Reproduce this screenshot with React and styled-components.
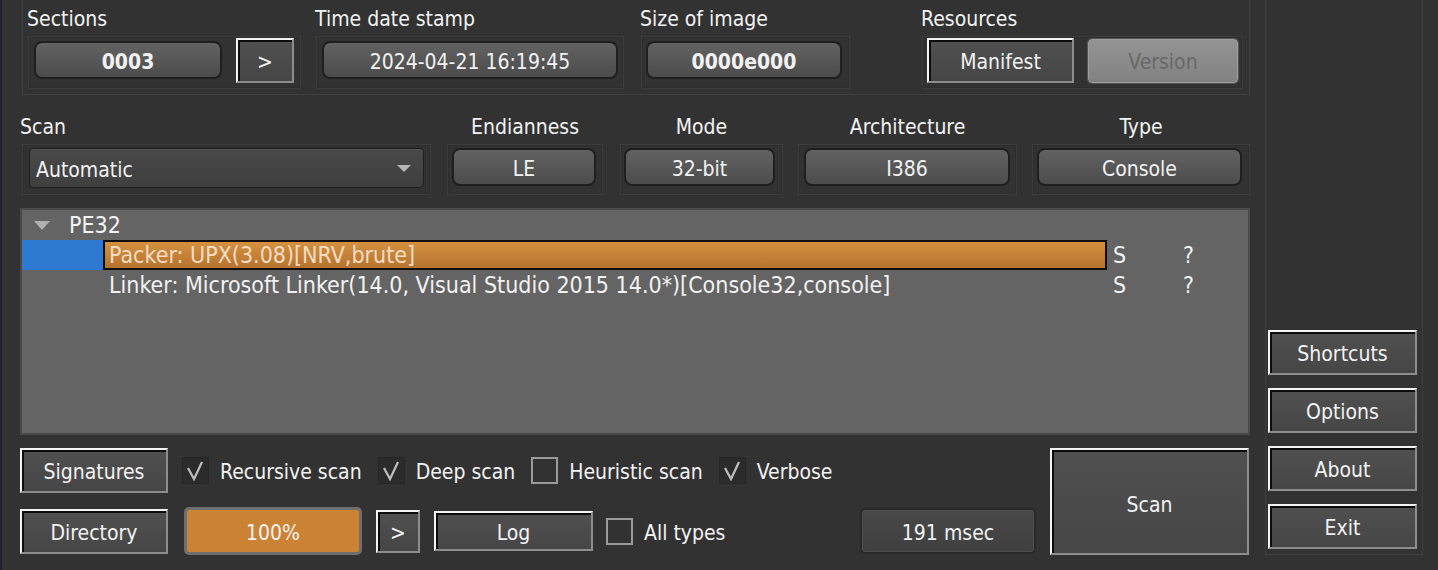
import React from 'react'
import styled, { createGlobalStyle } from 'styled-components'

const GlobalStyle = createGlobalStyle`
  html, body {
    margin: 0;
    padding: 0;
    background-color: #323232;
  }
  body {
    font-family: "DejaVu Sans Condensed", "DejaVu Sans", sans-serif;
    color: #f2f2f2;
  }
`

const Page = styled.div`
  display: flex;
  width: 1438px;
  height: 570px;
  box-sizing: border-box;
  padding-left: 18px;
  border-left: 2px solid #261f31;
  background-color: #323232;
  font-size: 21px;
  overflow: hidden;
`
const MainColumn = styled.div`
  display: flex;
  flex-direction: column;
  width: 1230px;
  flex-shrink: 0;
`
const SideColumn = styled.div`
  display: flex;
  flex-direction: column;
  justify-content: flex-end;
  gap: 13px;
  width: 158px;
  height: 555px;
  flex-shrink: 0;
  box-sizing: border-box;
  margin-left: 15px;
  padding: 0 0 5px 2px;
  border: 1px solid #3e3e3e;
  border-top: none;
`

const HeaderGroup = styled.div`
  display: flex;
  margin-left: 2px;
  height: 95px;
  box-sizing: border-box;
  padding: 0 0 5px 5px;
  border: 1px solid #3f3f3f;
  border-top: none;
`
const InfoBlock = styled.div`
  display: flex;
  flex-direction: column;
  width: ${(props) => props.$w}px;
  margin-left: ${(props) => props.$ml || 0}px;
  flex-shrink: 0;
`
const Caption = styled.div`
  height: 22px;
  line-height: 24px;
  margin-top: ${(props) => props.$top || 0}px;
  margin-left: ${(props) => (props.$center ? 0 : props.$shift ?? -1)}px;
  text-align: ${(props) => (props.$center ? 'center' : 'left')};
  white-space: nowrap;
`
const Frame = styled.div`
  display: flex;
  align-items: center;
  gap: ${(props) => props.$gap || 0}px;
  height: ${(props) => props.$h}px;
  margin-top: 7px;
  box-sizing: border-box;
  padding: ${(props) => props.$pad};
  border: 1px solid #3d3d3d;
  box-shadow: inset 0 0 0 1px #2d2d2d;
`
const ValueBox = styled.div`
  flex: 1;
  height: 38px;
  box-sizing: border-box;
  display: flex;
  align-items: center;
  justify-content: center;
  padding-top: 3px;
  border: 2px solid #1f1f1f;
  border-radius: 8px;
  background: linear-gradient(#626262, #4c4c4c);
  font-weight: ${(props) => (props.$bold ? 700 : 400)};
  white-space: nowrap;
`
const PushButton = styled.div`
  width: ${(props) => props.$w}px;
  height: ${(props) => props.$h || 45}px;
  flex-shrink: 0;
  box-sizing: border-box;
  display: flex;
  align-items: center;
  justify-content: center;
  padding-top: 3px;
  border-style: solid;
  border-width: 2px;
  border-color: #f4f4f4 #8d8d8d #8d8d8d #f4f4f4;
  box-shadow: inset 2px 2px 0 #0c0c0c;
  background: linear-gradient(#505050, #464646);
  white-space: nowrap;
`
const DisabledButton = styled.div`
  width: ${(props) => props.$w}px;
  height: 44px;
  flex-shrink: 0;
  box-sizing: border-box;
  display: flex;
  align-items: center;
  justify-content: center;
  padding-top: 3px;
  border: 1px solid #9d9d9d;
  border-radius: 4px;
  box-shadow: 0 0 0 1px #555;
  background: linear-gradient(#939393, #828282);
  color: #686868;
`

const SelectorRow = styled.div`
  display: flex;
  margin-top: 20px;
`
const Combo = styled.div`
  flex: 1;
  height: 40px;
  box-sizing: border-box;
  display: flex;
  align-items: center;
  justify-content: space-between;
  padding: 3px 12px 0 6px;
  border: 1px solid #1e1e1e;
  border-radius: 4px;
  box-shadow: inset 0 1px 0 #555;
  background: linear-gradient(#494949, #3f3f3f);
`
const ComboArrow = styled.span`
  width: 0;
  height: 0;
  margin-bottom: 3px;
  border-left: 7px solid transparent;
  border-right: 7px solid transparent;
  border-top: 7px solid #b4b4b4;
`

const ResultTree = styled.div`
  margin-top: 13px;
  height: 227px;
  box-sizing: border-box;
  border: 2px solid #4a4a4a;
  background-color: #646464;
  font-size: 23px;
`
const TreeRow = styled.div`
  display: grid;
  grid-template-columns: 81px 1004px 70px 1fr;
  height: 30px;
  line-height: 30px;
  white-space: nowrap;
`
const RootRow = styled.div`
  display: flex;
  align-items: center;
  height: 30px;
  padding-left: 12px;
`
const TreeArrow = styled.span`
  width: 0;
  height: 0;
  border-left: 8px solid transparent;
  border-right: 8px solid transparent;
  border-top: 9px solid #b0b0b0;
  margin-right: 19px;
`
const IndentCell = styled.div`
  background-color: ${(props) => (props.$selected ? '#2e79d2' : 'transparent')};
`
const NameCell = styled.div`
  box-sizing: border-box;
  padding-left: ${(props) => (props.$selected ? 4 : 6)}px;
  ${(props) =>
    props.$selected &&
    `
    border: 2px solid #0d0d0d;
    line-height: 26px;
    background: linear-gradient(#d5913f, #b6732f);
    color: #f3dcc3;
  `}
`
const FlagCell = styled.div`
  padding-left: 6px;
`

const BottomArea = styled.div`
  display: flex;
  margin-top: 13px;
  height: 107px;
`
const Controls = styled.div`
  flex: 1;
  display: flex;
  flex-direction: column;
  gap: 14px;
`
const ControlRow = styled.div`
  display: flex;
  align-items: center;
  height: ${(props) => props.$h}px;
`
const CheckItem = styled.div`
  display: flex;
  align-items: center;
  gap: 11px;
  margin-left: ${(props) => props.$ml}px;
  white-space: nowrap;
`
const CheckText = styled.span`
  padding-top: 3px;
`
const CheckBox = styled.span`
  display: flex;
  width: 27px;
  height: 27px;
  box-sizing: border-box;
  border: ${(props) => (props.$checked ? '1px solid #262626' : '2px solid #9a9a9a')};
  background-color: ${(props) => (props.$checked ? '#2b2b2b' : 'transparent')};
`
const Progress = styled.div`
  width: 178px;
  height: 48px;
  margin-left: 16px;
  box-sizing: border-box;
  display: flex;
  align-items: center;
  justify-content: center;
  padding-top: 3px;
  border: 3px solid #6f6f6f;
  border-radius: 5px;
  background-color: #cc8234;
`
const Spacer = styled.div`
  width: ${(props) => props.$w}px;
  flex-shrink: 0;
`
const TimerBox = styled.div`
  width: 176px;
  height: 46px;
  margin-left: auto;
  box-sizing: border-box;
  display: flex;
  align-items: center;
  justify-content: center;
  padding-top: 3px;
  border: 2px solid #2a2a2a;
  border-radius: 5px;
  box-shadow: inset 0 0 0 1px #4e4e4e;
  background: linear-gradient(#484848, #404040);
`
const ScanButton = styled(PushButton)`
  margin-left: 14px;
  margin-right: 1px;
  padding-top: 6px;
`

function Check({ checked, label, ml }) {
  return (
    <CheckItem $ml={ml}>
      <CheckBox $checked={checked}>
        {checked && (
          <svg width="25" height="25" viewBox="0 0 25 25">
            <polyline
              points="5,10 11,21 19,4"
              fill="none"
              stroke="#bdbdbd"
              strokeWidth="2.2"
            />
          </svg>
        )}
      </CheckBox>
      <CheckText>{label}</CheckText>
    </CheckItem>
  )
}

const results = [
  { name: 'Packer: UPX(3.08)[NRV,brute]', selected: true },
  { name: 'Linker: Microsoft Linker(14.0, Visual Studio 2015 14.0*)[Console32,console]' },
]

export default function App() {
  return (
    <>
      <GlobalStyle />
      <Page>
        <MainColumn>
          <HeaderGroup>
            <InfoBlock $w={273}>
              <Caption $top={7}>Sections</Caption>
              <Frame $h={53} $gap={14} $pad="0 6px 5px 5px">
                <ValueBox $bold>0003</ValueBox>
                <PushButton $w={58}>&gt;</PushButton>
              </Frame>
            </InfoBlock>
            <InfoBlock $w={308} $ml={15}>
              <Caption $top={7}>Time date stamp</Caption>
              <Frame $h={53} $pad="0 5px 5px 5px">
                <ValueBox>2024-04-21 16:19:45</ValueBox>
              </Frame>
            </InfoBlock>
            <InfoBlock $w={209} $ml={17}>
              <Caption $top={7}>Size of image</Caption>
              <Frame $h={53} $pad="0 7px 5px 4px">
                <ValueBox $bold>0000e000</ValueBox>
              </Frame>
            </InfoBlock>
            <InfoBlock $w={321} $ml={72}>
              <Caption $top={7}>Resources</Caption>
              <Frame $h={53} $gap={14} $pad="0 4px 4px 4px">
                <PushButton $w={147}>Manifest</PushButton>
                <DisabledButton $w={150}>Version</DisabledButton>
              </Frame>
            </InfoBlock>
          </HeaderGroup>

          <SelectorRow>
            <InfoBlock $w={409} $ml={2}>
              <Caption $shift={-2}>Scan</Caption>
              <Frame $h={51} $pad="0 6px 3px 6px">
                <Combo>
                  Automatic
                  <ComboArrow />
                </Combo>
              </Frame>
            </InfoBlock>
            <InfoBlock $w={156} $ml={16}>
              <Caption $center>Endianness</Caption>
              <Frame $h={51} $pad="0 6px 5px 4px">
                <ValueBox>LE</ValueBox>
              </Frame>
            </InfoBlock>
            <InfoBlock $w={163} $ml={17}>
              <Caption $center>Mode</Caption>
              <Frame $h={51} $pad="0 7px 5px 3px">
                <ValueBox>32-bit</ValueBox>
              </Frame>
            </InfoBlock>
            <InfoBlock $w={219} $ml={15}>
              <Caption $center>Architecture</Caption>
              <Frame $h={51} $pad="0 6px 5px 5px">
                <ValueBox>I386</ValueBox>
              </Frame>
            </InfoBlock>
            <InfoBlock $w={218} $ml={15}>
              <Caption $center>Type</Caption>
              <Frame $h={51} $pad="0 7px 5px 4px">
                <ValueBox>Console</ValueBox>
              </Frame>
            </InfoBlock>
          </SelectorRow>

          <ResultTree>
            <RootRow>
              <TreeArrow />
              PE32
            </RootRow>
            {results.map((r) => (
              <TreeRow key={r.name}>
                <IndentCell $selected={r.selected} />
                <NameCell $selected={r.selected}>{r.name}</NameCell>
                <FlagCell>S</FlagCell>
                <FlagCell>?</FlagCell>
              </TreeRow>
            ))}
          </ResultTree>

          <BottomArea>
            <Controls>
              <ControlRow $h={45}>
                <PushButton $w={148}>Signatures</PushButton>
                <Check checked label="Recursive scan" ml={14} />
                <Check checked label="Deep scan" ml={16} />
                <Check label="Heuristic scan" ml={16} />
                <Check checked label="Verbose" ml={16} />
              </ControlRow>
              <ControlRow $h={48}>
                <PushButton $w={148}>Directory</PushButton>
                <Progress>100%</Progress>
                <Spacer $w={14} />
                <PushButton $w={44} $h={43}>&gt;</PushButton>
                <Spacer $w={14} />
                <PushButton $w={159} $h={40}>Log</PushButton>
                <Check label="All types" ml={13} />
                <TimerBox>191 msec</TimerBox>
              </ControlRow>
            </Controls>
            <ScanButton $w={199} $h={107}>Scan</ScanButton>
          </BottomArea>
        </MainColumn>

        <SideColumn>
          <PushButton $w={149}>Shortcuts</PushButton>
          <PushButton $w={149}>Options</PushButton>
          <PushButton $w={149}>About</PushButton>
          <PushButton $w={149}>Exit</PushButton>
        </SideColumn>
      </Page>
    </>
  )
}
